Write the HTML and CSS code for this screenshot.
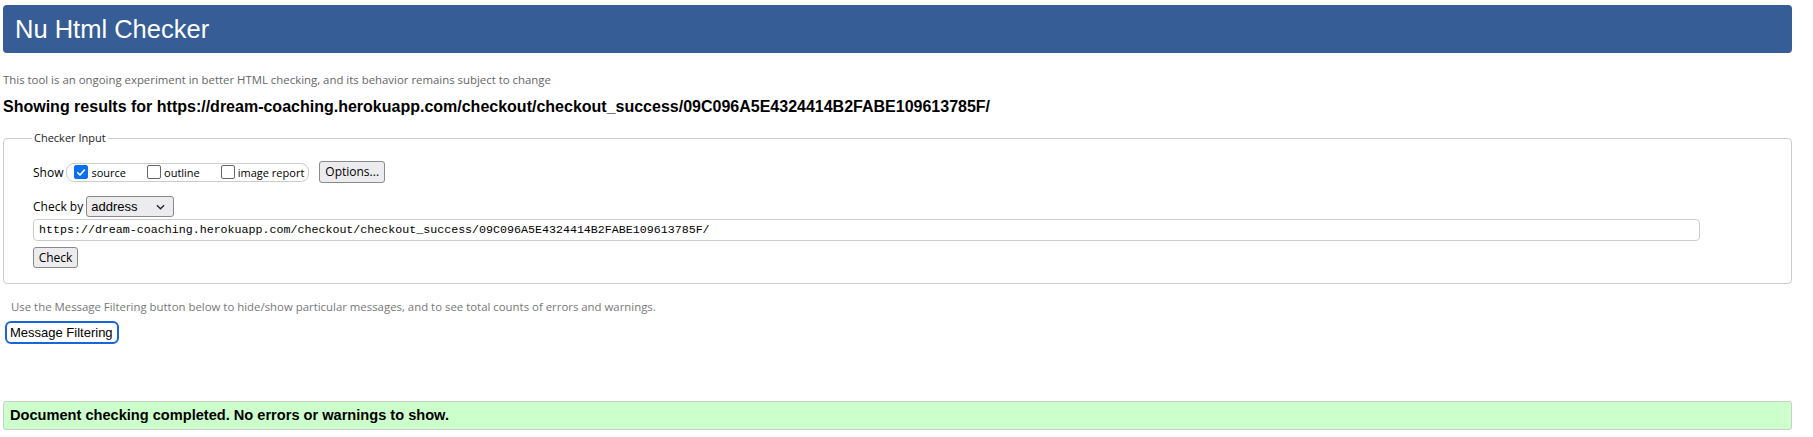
FILE: index.html
```html
<!DOCTYPE html>
<html>
<head>
<meta charset="utf-8">
<link rel="stylesheet" href="styles.css">
</head>
<body>
<div class="page">
  <h1 class="banner">Nu Html Checker</h1>
  <p class="intro">This tool is an ongoing experiment in better HTML checking, and its behavior remains subject to change</p>
  <h2 class="results-for">Showing results for https://dream-coaching.herokuapp.com/checkout/checkout_success/09C096A5E4324414B2FABE109613785F/</h2>
  <fieldset class="checker">
    <legend class="legend">Checker Input</legend>
    <div class="row show-row">
      <span class="label">Show</span>
      <span class="pill">
        <label class="opt"><span class="box checked"><svg viewBox="0 0 13 13" width="13" height="13"><path d="M3 6.8 L5.4 9.2 L10.2 3.8" fill="none" stroke="#fff" stroke-width="1.8" stroke-linecap="round" stroke-linejoin="round"/></svg></span>source</label>
        <label class="opt"><span class="box"></span>outline</label>
        <label class="opt"><span class="box"></span>image report</label>
      </span>
      <span class="btn options">Options...</span>
    </div>
    <div class="row by-row">
      <span class="label">Check by</span>
      <span class="select">address<svg class="chev" viewBox="0 0 10 6" width="9" height="6"><path d="M1 1 L5 5 L9 1" fill="none" stroke="#222" stroke-width="1.4"/></svg></span>
    </div>
    <div class="url">https://dream-coaching.herokuapp.com/checkout/checkout_success/09C096A5E4324414B2FABE109613785F/</div>
    <div class="row check-row"><span class="btn check">Check</span></div>
  </fieldset>
  <p class="filter-note">Use the Message Filtering button below to hide/show particular messages, and to see total counts of errors and warnings.</p>
  <span class="filter-btn">Message Filtering</span>
  <div class="success">Document checking completed. No errors or warnings to show.</div>
</div>
</body>
</html>
```

FILE: styles.css
```css
html, body { margin: 0; padding: 0; background: #fff; }
body { font-family: "Open Sans", "Noto Sans", sans-serif; color: #000; }
.page { width: 1789px; margin-left: 3px; padding-top: 5px; }
.banner {
  margin: 0; height: 48px; background: #365d95; color: #fff;
  border-radius: 4px; font-family: "Liberation Sans", Arial, sans-serif;
  font-weight: normal; font-size: 25.5px; line-height: 48px; padding-left: 12px;
}
.intro { margin: 19px 0 0 0; font-size: 11.4px; color: #666; line-height: 15px; }
.results-for {
  margin: 10px 0 0 0; font-family: "Liberation Sans", Arial, sans-serif;
  font-size: 16px; font-weight: bold; line-height: 20px;
}
.checker {
  margin: 13px 0 0 0; border: 1px solid #ccc; border-radius: 4px;
  padding: 15px 0 15px 29px; min-width: 0;
}
.legend { font-size: 11px; padding: 0 2px; margin-left: -1px; color: #222; line-height: 16px; }
.row { display: flex; align-items: center; }
.show-row { height: 22px; }
.label { font-size: 12px; margin-right: 3px; }
.pill {
  display: inline-flex; align-items: center; border: 1px solid #ccc; border-radius: 8px;
  height: 17px; padding: 0 4px 0 7px;
}
.opt { display: inline-flex; align-items: center; font-size: 11px; margin-right: 21px; }
.opt:last-child { margin-right: 0; }
.box {
  width: 12px; height: 12px; border: 1px solid #666; border-radius: 2px; margin-right: 3px;
  display: inline-flex; align-items: center; justify-content: center; background: #fff;
}
.box.checked { background: #0a6ff0; border-color: #0a6ff0; }
.box svg { width: 13px; height: 13px; }
.btn {
  display: inline-block; box-sizing: border-box; border: 1px solid #8a8a8a; border-radius: 3px;
  background: #ececee; font-size: 12px; padding: 0 5px; color: #000;
}
.options { margin-left: 10px; height: 22px; line-height: 20px; }
.by-row { margin-top: 13px; }
.select {
  display: inline-flex; align-items: center; justify-content: space-between; box-sizing: border-box;
  width: 88px; height: 21px; border: 1px solid #8a8a8a; border-radius: 3px; background: #ececee;
  font-family: "Liberation Sans", Arial, sans-serif; font-size: 13px; padding: 0 8px 0 4px;
}
.chev { margin-left: 4px; }
.url {
  margin-top: 2px; width: 1667px; height: 22px; box-sizing: border-box;
  border: 1px solid #ccc; border-radius: 4px; padding: 0 5px;
  font-family: "Liberation Mono", monospace; font-size: 11.65px; line-height: 20px;
}
.check-row { margin-top: 6px; }
.check { height: 21px; line-height: 19px; width: 45px; text-align: center; padding: 0; }
.filter-note { margin: 15px 0 0 8px; font-size: 11.4px; color: #777; line-height: 15px; }
.filter-btn {
  display: inline-block; margin: 7px 0 0 2px; border: 2px solid #1766d9; border-radius: 6px;
  font-family: "Liberation Sans", Arial, sans-serif; font-size: 13px; line-height: 19px; padding: 0 4px 0 3px;
}
.success {
  margin-top: 57px; height: 29px; box-sizing: border-box; background: #ccffcc;
  border: 1px solid #ccc; border-radius: 3px; padding-left: 6px;
  font-family: "Liberation Sans", Arial, sans-serif; font-weight: bold; font-size: 14.6px; line-height: 27px;
}
```
